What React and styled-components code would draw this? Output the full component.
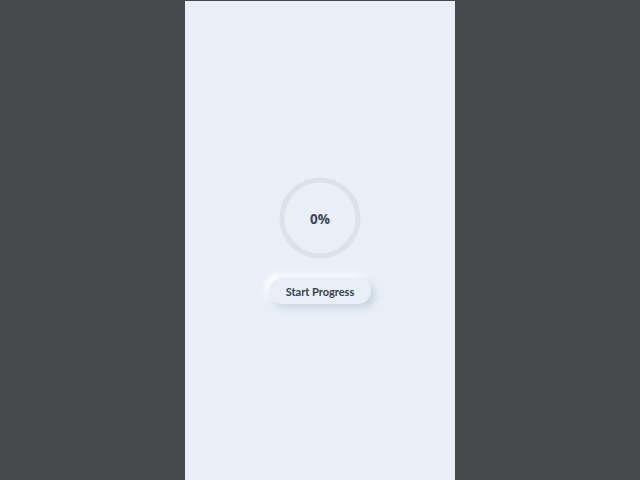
import React, { useState, useEffect, useRef } from 'react';
import styled, { createGlobalStyle } from 'styled-components';

const GlobalStyle = createGlobalStyle`
  html, body {
    margin: 0;
    padding: 0;
    background: #474849;
    font-family: Lato, "Open Sans", sans-serif;
  }
`;

const Page = styled.div`
  display: flex;
  justify-content: center;
  padding-top: 1px;
  height: 479px;
`;

const Phone = styled.div`
  width: 270px;
  height: 100%;
  background: #e8eff8;
  display: flex;
  flex-direction: column;
  align-items: center;
  justify-content: center;
  gap: 19px;
`;

const Ring = styled.div`
  position: relative;
  width: 82px;
  height: 82px;
  display: flex;
  align-items: center;
  justify-content: center;
  svg {
    position: absolute;
    inset: 0;
    transform: rotate(-90deg);
  }
`;

const Value = styled.span`
  position: relative;
  top: 1px;
  font-family: "Open Sans", sans-serif;
  font-size: 13.5px;
  font-weight: 700;
  color: #3b4658;
`;

const Button = styled.button`
  height: 26px;
  padding: 0 17px;
  border: none;
  border-radius: 13px;
  background: #e9eff7;
  box-shadow: 4px 4px 8px #c9d2de, -4px -4px 8px #ffffff;
  font-family: Lato, "Open Sans", sans-serif;
  font-size: 11px;
  font-weight: 700;
  color: #334055;
  cursor: pointer;
`;

export default function App() {
  const [progress, setProgress] = useState(0);
  const timer = useRef(null);

  useEffect(() => () => clearInterval(timer.current), []);

  const start = () => {
    clearInterval(timer.current);
    setProgress(0);
    timer.current = setInterval(() => {
      setProgress((p) => {
        if (p >= 100) {
          clearInterval(timer.current);
          return 100;
        }
        return p + 1;
      });
    }, 40);
  };

  const r = 38;
  const c = 2 * Math.PI * r;

  return (
    <>
      <GlobalStyle />
      <Page>
        <Phone>
          <Ring>
            <svg width="82" height="82" viewBox="0 0 82 82">
              <circle cx="41" cy="41" r={r} fill="none" stroke="#dbe2eb" strokeWidth="5" />
              <circle
                cx="41"
                cy="41"
                r={r}
                fill="none"
                stroke="#6c8cd5"
                strokeWidth="5"
                strokeLinecap="round"
                strokeDasharray={c}
                strokeDashoffset={c - (c * progress) / 100}
                opacity={progress > 0 ? 1 : 0}
              />
            </svg>
            <Value>{progress}%</Value>
          </Ring>
          <Button onClick={start}>Start Progress</Button>
        </Phone>
      </Page>
    </>
  );
}
